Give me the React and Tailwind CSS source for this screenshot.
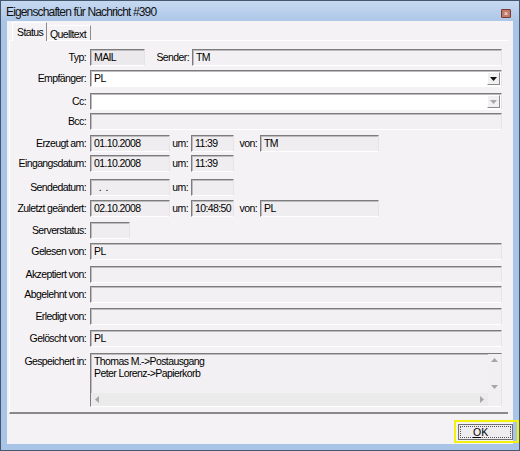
import React from 'react';

const sunken =
    'border-t border-l border-[#7c7c7c] border-b border-r border-b-white border-r-[#e6e4e6] shadow-[inset_1px_1px_0_#bdbbbd]';

function Box({ value = '', className = '', bg = 'bg-[#efedef]' }) {
    return (
        <div className={`${sunken} ${bg} ${className} h-full overflow-hidden whitespace-nowrap px-[3px] leading-[15px]`}>
            {value}
        </div>
    );
}

function Row({ label, mt, className = 'h-[17px]', children }) {
    return (
        <div className={`flex ${mt} ${className}`}>
            <div className="w-[77px] shrink-0 pr-[2px] pt-[2px] text-right leading-[13px]">{label}</div>
            <div className="ml-[2px] flex min-w-0 flex-1">{children}</div>
        </div>
    );
}

function Inline({ label, w }) {
    return <div className={`${w} shrink-0 pr-[3px] pt-[2px] text-right leading-[13px]`}>{label}</div>;
}

function ComboArrow({ disabled }) {
    return (
        <div className="my-[1px] mr-[1px] flex w-[13px] items-center justify-center border-t border-l border-b border-r border-t-white border-l-white border-b-[#8a8a8a] border-r-[#8a8a8a] bg-[#f2f0f2]">
            <svg width="7" height="4" viewBox="0 0 7 4">
                <path d="M0 0h7L3.5 4z" fill={disabled ? '#a8a8a8' : '#111'} />
            </svg>
        </div>
    );
}

function Combo({ value, disabled }) {
    return (
        <div className={`${sunken} flex h-full flex-1 bg-white`}>
            <div className="flex-1 px-[3px] leading-[15px]">{value}</div>
            <ComboArrow disabled={disabled} />
        </div>
    );
}

function Triangle({ dir }) {
    const paths = {
        up: 'M0 4h7L3.5 0z',
        down: 'M0 0h7L3.5 4z',
        left: 'M4 0v7L0 3.5z',
        right: 'M0 0v7L4 3.5z',
    };
    const vertical = dir === 'up' || dir === 'down';
    return (
        <svg width={vertical ? 7 : 4} height={vertical ? 4 : 7} viewBox={vertical ? '0 0 7 4' : '0 0 4 7'}>
            <path d={paths[dir]} fill="#a6a6a6" />
        </svg>
    );
}

function DateRow({ label, mt, date, time, by }) {
    return (
        <Row label={label} mt={mt}>
            <Box value={date} className="w-[80px] shrink-0" />
            <Inline label="um:" w="w-[21px]" />
            <Box value={time} className="w-[43px] shrink-0" />
            {by !== undefined && (
                <>
                    <Inline label="von:" w="w-[26px]" />
                    <Box value={by} className="w-[119px] shrink-0" />
                </>
            )}
        </Row>
    );
}

export default function App() {
    return (
        <div className="flex h-[451px] w-[520px] flex-col border border-[#44576d] bg-[#a8c5e8] font-['Liberation_Sans',Arial,sans-serif] text-[10.5px] tracking-[-0.6px] text-black">
            {/* title bar */}
            <div className="flex h-[20px] shrink-0 items-center bg-gradient-to-b from-[#c6d9f1] to-[#adc7e8] pl-[5px] pr-[8px]">
                <span className="flex-1 pt-[2px] text-[12px] tracking-[-0.85px] text-[#111]">
                    Eigenschaften für Nachricht #390
                </span>
                <div className="mt-[4px] flex h-[9px] w-[10px] items-center justify-center rounded-[1px] border border-[#7a3a30] bg-[#c07868] text-[7px] leading-none text-white tracking-normal">
                    ×
                </div>
            </div>

            {/* client area */}
            <div className="mx-[6px] mb-[6px] flex flex-1 flex-col bg-[#f5f2f5]">
                {/* tabs */}
                <div className="flex h-[19px] items-end pl-[5px]">
                    <div className="relative z-10 mb-[-1px] h-[19px] w-[35px] border-t border-l border-r border-t-white border-l-white border-r-[#8c8c8c] bg-[#f5f2f5] pl-[4px] pt-[3px] leading-[13px]">
                        Status
                    </div>
                    <div className="h-[15px] w-[44px] border-t border-r border-t-white border-r-[#8c8c8c] pl-[3px] pt-[2px] leading-[12px]">
                        Quelltext
                    </div>
                </div>

                {/* tab panel */}
                <div className="ml-[2px] mr-[5px] flex flex-col border-t border-l border-t-white border-l-white border-b-2 border-b-[#8a888a] pb-[5px] pl-[1px] pr-[6px] pt-[8px]">
                    <Row label="Typ:" mt="mt-0">
                        <Box value="MAIL" className="w-[55px] shrink-0" bg="bg-[#ebe9eb]" />
                        <Inline label="Sender:" w="w-[47px]" />
                        <Box value="TM" className="flex-1" bg="bg-[#f3f0f3]" />
                    </Row>
                    <Row label="Empfänger:" mt="mt-[4px]">
                        <Combo value="PL" />
                    </Row>
                    <Row label="Cc:" mt="mt-[6px]">
                        <Combo value="" disabled />
                    </Row>
                    <Row label="Bcc:" mt="mt-[3px]">
                        <Box className="flex-1" bg="bg-[#f3f0f3]" />
                    </Row>
                    <DateRow label="Erzeugt am:" mt="mt-[5px]" date="01.10.2008" time="11:39" by="TM" />
                    <DateRow label="Eingangsdatum:" mt="mt-[3px]" date="01.10.2008" time="11:39" />
                    <DateRow label="Sendedatum:" mt="mt-[7px]" date={'\u00a0\u00a0.\u00a0\u00a0.'} time="" />
                    <DateRow label="Zuletzt geändert:" mt="mt-[4px]" date="02.10.2008" time="10:48:50" by="PL" />
                    <Row label="Serverstatus:" mt="mt-[5px]">
                        <Box className="w-[40px] shrink-0" />
                    </Row>
                    <Row label="Gelesen von:" mt="mt-[4px]">
                        <Box value="PL" className="flex-1" bg="bg-[#f3f0f3]" />
                    </Row>
                    <Row label="Akzeptiert von:" mt="mt-[6px]">
                        <Box className="flex-1" bg="bg-[#f3f0f3]" />
                    </Row>
                    <Row label="Abgelehnt von:" mt="mt-[3px]">
                        <Box className="flex-1" bg="bg-[#f3f0f3]" />
                    </Row>
                    <Row label="Erledigt von:" mt="mt-[5px]">
                        <Box className="flex-1" bg="bg-[#f3f0f3]" />
                    </Row>
                    <Row label="Gelöscht von:" mt="mt-[5px]">
                        <Box value="PL" className="flex-1" bg="bg-[#f3f0f3]" />
                    </Row>
                    <Row label="Gespeichert in:" mt="mt-[6px]" className="h-[54px]">
                        <div className={`${sunken} grid flex-1 grid-cols-[1fr_13px] grid-rows-[1fr_13px] bg-[#f3f0f3]`}>
                            <div className="px-[3px] pt-[1px] leading-[12px]">
                                <div>Thomas M.-&gt;Postausgang</div>
                                <div>Peter Lorenz-&gt;Papierkorb</div>
                            </div>
                            <div className="flex flex-col items-center justify-between bg-[#f1eff1] py-[4px]">
                                <Triangle dir="up" />
                                <Triangle dir="down" />
                            </div>
                            <div className="flex items-center justify-between bg-[#ecebec] px-[4px]">
                                <Triangle dir="left" />
                                <Triangle dir="right" />
                            </div>
                            <div className="bg-[#f1eff1]" />
                        </div>
                    </Row>
                </div>

                {/* buttons */}
                <div className="flex justify-end pt-[6px]">
                    <div className="mr-[-6px] h-[23px] w-[65px] border-2 border-[#f2f20a] pl-[2px] pr-[4px] pt-[2px]">
                        <div className="h-[16px] border border-[#707070] bg-[#eeecee] p-[1px]">
                            <div className="h-full border border-dotted border-[#555] pl-[12px] leading-[11px] tracking-normal">
                                <span className="underline">O</span>K
                            </div>
                        </div>
                    </div>
                </div>
            </div>
        </div>
    );
}
